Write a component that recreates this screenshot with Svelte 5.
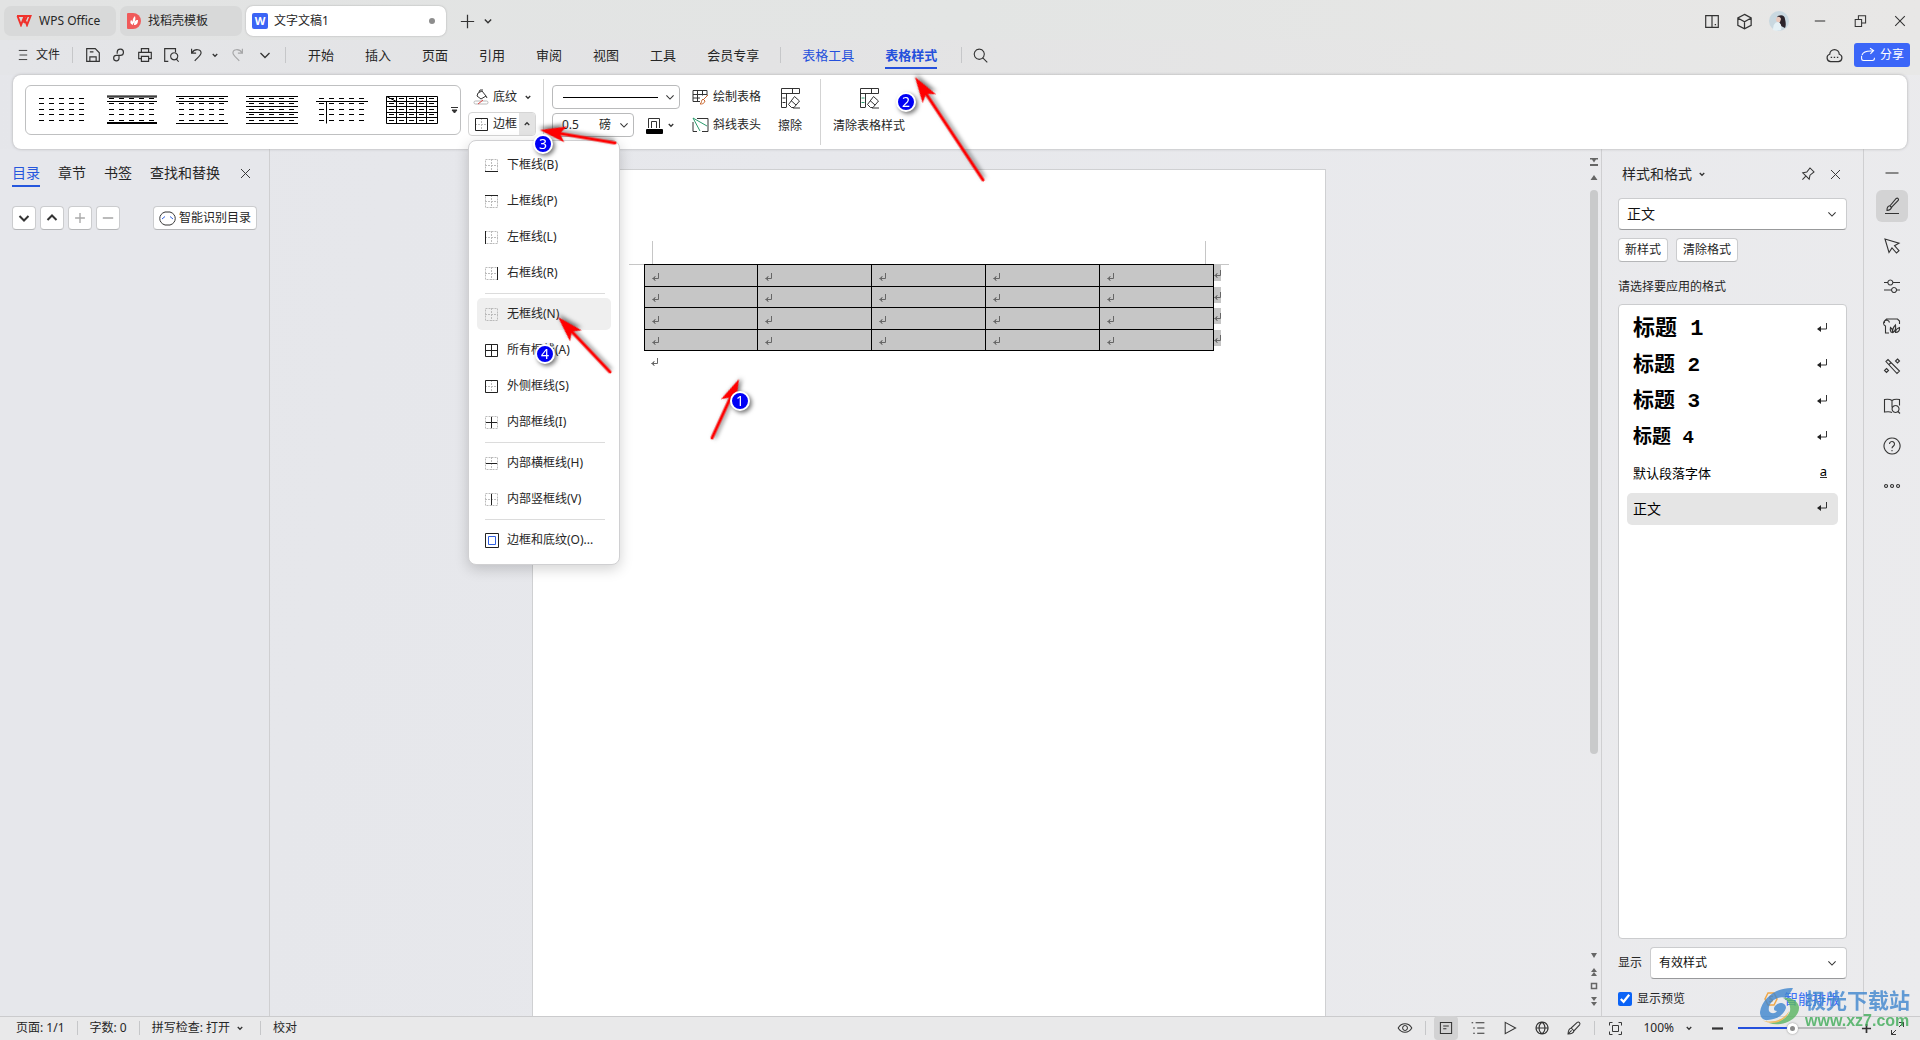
<script lang="ts">
  const ic: Record<string, string> = {
    burger: 'M4 3.500h12M5 10h11M4 16.500h12',
    save: 'M3 3h9.500l4.500 4.500v9.500h-14zM6.500 17v-5h7v5M6.500 6.500h4',
    link: 'M8 8.500v-2a3.500 3.500 0 1 1 3.500 4h-4.500a3 3 0 1 0 3 3.500v-3',
    print: 'M6 7v-4h8v4M6 14h-3v-7h14v7h-3M6 11.500h8v5.500h-8z',
    find: 'M7 17h-4v-14h12v4M13.500 7.500a4 4 0 1 0 .1 0M16 14.500l2.500 3',
    undo: 'M4 3v5h5M4.500 7.500c3-5 10-4 10 0 0 3-4 5.500-7 9',
    redo: 'M16 3v5h-5M15.500 7.500c-3-5-10-4-10 0 0 3 4 5.500 7 9',
    down: 'M5.500 8l4.500 4.500 4.500-4.500',
    up: 'M5.500 12l4.500-4.500 4.500 4.500',
    plus: 'M10 3v14M3 10h14',
    minus: 'M3.500 10h13',
    close: 'M4 4l12 12M16 4l-12 12',
    search: 'M8.500 2.500a6 6 0 1 0 .1 0M13 13l5 5',
    split: 'M3 4h14v13h-14zM10 4v13M13 14h1.500',
    cube: 'M10 2.500l7 3.800v7.700l-7 3.800-7-3.800v-7.700zM3 6.300l7 4 7-4M10 10.300v7.500',
    restore: 'M4 8h8v9h-8zM8 8v-4.500h9v9h-5',
    cloud: 'M6 16.500a4 4 0 0 1-1-7.800 5 5 0 0 1 10 0 4 4 0 0 1-1 7.800zM6 12h1.500M9.200 12h1.500M12.500 12h1.500',
    share: 'M2 11v3.500a2.500 2.500 0 0 0 2.500 2.500h11a2.500 2.500 0 0 0 2.500-2.500v-1M2.500 10c1-3 6-5.500 13.500-5M12.500 1.500l4.500 3-4 4',
    pin: 'M3 17l4-4M3.500 8.500l8 8 1-5 5-4-5-5-4 5z',
    pen: 'M3 17.500h14M5 14.500c-.2-3 .8-4.500 3.200-5l6-7c1.500-1 3 .5 2 2l-6.500 6.500c-.6 2.300-2 3.300-4.700 3.500zM8 10l2 2',
    cursor: 'M3 3l4 13.500 3-4.500 4.500 5 2.500-2.300-4.500-5 4.500-2.500z',
    sliders: 'M2 6.500h3.500M11 6.500h7M8.300 4a2.500 2.500 0 1 0 .1 0M2 14h7M15 14h3M12 11.500a2.500 2.500 0 1 0 .1 0',
    art: 'M7 17h-3.500v-7a3 3 0 1 1 4-3.500M2.500 7v-2l2-2h11l2 2v3M9 16c-1-2-1-3-.5-4.500 2 1.500 2.500 3 2 5zM11 16.500c-1-3 .5-5.500 2.500-7.500 .5 3 0 6-2.500 7.500zM13.500 16.500c0-2.500 1.500-4 4-5 .3 3-1 5-4 5z',
    wand: 'M4 5.500l2-2 11.500 11.500-2.500 2.500zM7 8.500l2-2M15.500 3l2 2-2 2-2-2zM4.500 12.500l2 2-2 2-2-2z',
    book: 'M10 16.500c-2-1.200-4-1-7.500-.5v-12.500c3.500-.5 5.500-.5 7.500 1 2-1.500 4-1.500 7.500-1v6M10 4.500v7M13.500 9.500a3.500 3.500 0 1 0 .1 0M16 15.500l2 2',
    help: 'M10 2a8 8 0 1 0 .1 0M7.500 8a2.500 2.500 0 1 1 4 2c-1 .8-1.500 1.200-1.500 2.300M10 14v1.200',
    dots: 'M4 8.500a1.500 1.500 0 1 0 .1 0M10 8.500a1.500 1.500 0 1 0 .1 0M16 8.500a1.500 1.500 0 1 0 .1 0',
    eye: 'M1.500 10c4-7 13-7 17 0-4 7-13 7-17 0zM10 7a3 3 0 1 0 .1 0',
    page: 'M3 3h14v14h-14zM6.500 7.500h7M6.500 11h4',
    list: 'M2 3.500h2M7 3.500h11M4 10h2M9 10h9M4 16.500h2M9 16.500h9',
    play: 'M4 3l13 7-13 7z',
    globe: 'M10 2.500a7.500 7.500 0 1 0 .1 0M2.500 10h15M10 2.500c-5 4-5 11 0 15M10 2.500c5 4 5 11 0 15',
    brush: 'M2.500 17.500c.3-4.500 1.500-7 4-7.500l7.500-7c2-1.500 4.500 1 3 3l-7 7.500c-.5 2.500-3 3.700-7.500 4zM6.500 10l3.500 3.500M2.500 17.500l4.500-4.500',
    fit: 'M2 6v-4h4M14 2h4v4M18 14v4h-4M6 18h-4v-4M6 6h8v8h-8z',
    expand: 'M12 2h6v6M18 2l-6 6M8 18h-6v-6M2 18l6-6',
  };
  const quick = ['save', 'link', 'print', 'find'];
  const ribbonTabs = ['开始', '插入', '页面', '引用', '审阅', '视图', '工具', '会员专享'];
  const dashRows = [3, 8, 14, 19, 25];
  const dashCols = [3, 13, 23, 33, 43];
  const thumbs = [
    { name: '无线', d: '' },
    { name: '粗上下', d: 'M1 1h50M1 2h50M1 6.500h50M1 27.500h50M1 28.500h50' },
    { name: '三线', d: 'M0 1.500h52M0 6.500h52M0 28.500h52' },
    { name: '横线', d: 'M0 1.500h52M0 6.500h52M0 11.500h52M0 17.500h52M0 22.500h52M0 28.500h52' },
    { name: '十字', d: 'M0 6.500h52M10.500 6.500v22' },
    { name: '网格', d: 'M.5 1.500h51v27h-51zM.5 6.500h51M.5 11.500h51M.5 17.500h51M.5 22.500h51M10.500 1.500v27M20.500 1.500v27M30.500 1.500v27M40.500 1.500v27M.5 1.500l10 5' },
  ];
  const groups = [
    [
      { t: '下框线(B)', d: 'M0 12.500h13' },
      { t: '上框线(P)', d: 'M0 .5h13' },
      { t: '左框线(L)', d: 'M.5 0v13' },
      { t: '右框线(R)', d: 'M12.500 0v13' },
    ],
    [
      { t: '无框线(N)', d: '' },
      { t: '所有框线(A)', d: 'M.5 .5h12v12h-12zM6.500 0v13M0 6.500h13' },
      { t: '外侧框线(S)', d: 'M.5 .5h12v12h-12z' },
      { t: '内部框线(I)', d: 'M6.500 1v11M1 6.500h11' },
    ],
    [
      { t: '内部横框线(H)', d: 'M1 6.500h11' },
      { t: '内部竖框线(V)', d: 'M6.500 1v11' },
    ],
  ];
  const styles = [
    { t: '标题 1', c: 'h1' },
    { t: '标题 2', c: 'h2' },
    { t: '标题 3', c: 'h3' },
    { t: '标题 4', c: 'h4' },
    { t: '默认段落字体', c: 'def' },
    { t: '正文', c: 'body' },
  ];
  const side = ['pen', 'cursor', 'sliders', 'art', 'wand', 'book', 'help', 'dots'];
  const views = ['page', 'list', 'play', 'globe', 'brush'];
  const arrows = [
    { x1: 712, y1: 438, x2: 739, y2: 379 },
    { x1: 983, y1: 180, x2: 915, y2: 77 },
    { x1: 615, y1: 143, x2: 540, y2: 130 },
    { x1: 610, y1: 372, x2: 558, y2: 317 },
  ].map((a) => {
    const len = Math.hypot(a.x2 - a.x1, a.y2 - a.y1);
    const deg = (Math.atan2(a.y2 - a.y1, a.x2 - a.x1) * 180) / Math.PI;
    return { ...a, len, deg };
  });
  const badges = [
    { n: 1, x: 740, y: 401 },
    { n: 2, x: 906, y: 102 },
    { n: 3, x: 543, y: 144 },
    { n: 4, x: 545, y: 354 },
  ];
  let zoom = $state(50);
  let preview = $state(true);
</script>

{#snippet icon(name: string, size: number = 16)}
  <svg class="icon" width={size} height={size} viewBox="0 0 20 20" aria-hidden="true"><path d={ic[name]} /></svg>
{/snippet}

{#snippet frame(d: string)}
  <svg class="frame" width="13" height="13" viewBox="0 0 13 13" aria-hidden="true">
    <path class="ghost" d="M.5 .5h12v12h-12zM6.500 0v13M0 6.500h13" />
    {#if d}<path {d} />{/if}
  </svg>
{/snippet}

{#snippet ret()}
  <svg class="ret" width="8" height="9" viewBox="0 0 8 9" aria-hidden="true"><path d="M6.500 0v5.500h-6M3.500 3l-2.500 2.500 2.500 2.500M2.500 4v3" /></svg>
{/snippet}

{#snippet eraser(green: boolean)}
  <svg width="21" height="22" viewBox="0 0 21 22" aria-hidden="true">
    <path d="M6 20.500h-4.500v-19h18v5h-18M6.500 6.500v14M12.500 1.500v5" />
    <path class:green d="M2.500 11h3M2.500 15.500h3" />
    <path d="M14.500 9.500l5 4.500-5.500 6.500h-2.500l-3-3zM11 13.500l5 4.500M13 21h7" />
  </svg>
{/snippet}

<div class="app">
  <header class="titlebar">
    <button class="tab">
      <svg width="16" height="12" viewBox="0 0 16 12" aria-hidden="true"><path class="wps" d="M1 1h13.500l-3.500 9-3-7.500-3 7.500-3.500-9M8 8l3-7" /></svg>
      WPS Office
    </button>
    <button class="tab docer">
      <svg width="14" height="16" viewBox="0 0 14 16" aria-hidden="true">
        <path class="red" d="M1 0h5a8 8 0 0 1 0 16h-5a1 1 0 0 1-1-1v-14a1 1 0 0 1 1-1z" />
        <path class="leaf" d="M6 12c-3-1-3-3-2-5 2 1 2 3 2 5zM6 11c-1-4 0-6 2-8 1 3 0 6-2 8zM7 12c0-3 1-5 4-5 0 3-1 5-4 5z" />
      </svg>
      找稻壳模板
    </button>
    <button class="tab active">
      <span class="wicon">W</span>
      文字文稿1
      <span class="dirty"></span>
    </button>
    <button class="bare newtab" aria-label="新建">{@render icon('plus', 19)}</button>
    <button class="bare tablist" aria-label="标签列表">{@render icon('down', 14)}</button>
    <div class="window">
      <button class="bare" aria-label="分屏">{@render icon('split', 18)}</button>
      <button class="bare" aria-label="应用">{@render icon('cube', 19)}</button>
      <svg class="avatar" width="20" height="20" viewBox="0 0 20 20" aria-hidden="true">
        <circle cx="10" cy="10" r="10" />
        <path class="hair" d="M8 6c3-3 8-2 8 2 1 4 1 7 0 9l-4-2z" />
        <path class="skin" d="M7 8c1-3 4-3 5 0l-1 3c-2 1-4 0-4-3z" />
        <path class="dress" d="M4 19c0-5 2-8 5-8 3 1 4 4 3 8-3 1-6 1-8 0z" />
      </svg>
      <button class="bare wide" aria-label="最小化">{@render icon('minus', 16)}</button>
      <button class="bare wide" aria-label="还原">{@render icon('restore', 16)}</button>
      <button class="bare wide" aria-label="关闭">{@render icon('close', 16)}</button>
    </div>
  </header>

  <nav class="menubar">
    <button class="bare file">{@render icon('burger', 14)}文件</button>
    <span class="vline"></span>
    <div class="quick">
      {#each quick as q}<button class="bare" aria-label={q}>{@render icon(q, 18)}</button>{/each}
      <button class="bare" aria-label="撤销">{@render icon('undo', 18)}</button>
      <button class="bare narrow bold" aria-label="撤销列表">{@render icon('down', 10)}</button>
      <button class="bare faded" aria-label="恢复">{@render icon('redo', 18)}</button>
      <button class="bare" aria-label="更多">{@render icon('down', 20)}</button>
    </div>
    <span class="vline"></span>
    <div class="tabs">
      {#each ribbonTabs as t}<button class="bare">{t}</button>{/each}
    </div>
    <span class="vline"></span>
    <button class="bare ctx">表格工具</button>
    <button class="bare ctx current">表格样式</button>
    <span class="vline"></span>
    <button class="bare searchbtn" aria-label="搜索">{@render icon('search', 17)}</button>
    <div class="account">
      <button class="bare" aria-label="云">{@render icon('cloud', 19)}</button>
      <button class="share">{@render icon('share', 16)}分享</button>
    </div>
  </nav>

  <section class="ribbon">
    <div class="gallery">
      {#each thumbs as th}
        <button class="thumb" aria-label={th.name}>
          <svg width="52" height="30" viewBox="0 0 52 30" aria-hidden="true">
            {#each dashRows as y}{#each dashCols as x}<rect {x} {y} width="5" height="1" />{/each}{/each}
            <path d={th.d} />
          </svg>
        </button>
      {/each}
      <button class="bare more" aria-label="更多样式"><svg width="7" height="7" viewBox="0 0 7 7" aria-hidden="true"><path d="M0 .5h7M1 3h5l-2.500 3z" /></svg></button>
    </div>
    <div class="stack">
      <button class="bare shade">
        <svg width="16" height="16" viewBox="0 0 16 16" aria-hidden="true">
          <path class="line" d="M5 4l4-2 4 5-5 3-4-3zM6 3l1-2h3M13 7l1 2" /><rect class="pale" x="1" y="12" width="14" height="3" rx="1.500" /><path class="redline" d="M5 15l5-4" />
        </svg>
        底纹 {@render icon('down', 10)}
      </button>
      <div class="split">
        <button class="main">{@render frame('M.5 .5h12v12h-12z')}边框</button>
        <button class="caret" aria-label="边框选项" aria-expanded="true">{@render icon('up', 10)}</button>
        <div class="menu" role="menu">
          {#each groups as g, gi}
            {#each g as item, i}
              <button role="menuitem" class:hover={gi === 1 && i === 0}>{@render frame(item.d)}{item.t}</button>
            {/each}
            <hr />
          {/each}
          <button role="menuitem" class="dialog">
            <svg class="frame" width="15" height="15" viewBox="0 0 15 15" aria-hidden="true"><path d="M.5 .5h13v14h-13z" /><path class="blue" d="M3.500 3.500h7v8h-7z" /></svg>边框和底纹(O)...
          </button>
        </div>
      </div>
    </div>
    <span class="rule"></span>
    <div class="stack pens">
      <button class="combo linetype" aria-label="线型"><span></span>{@render icon('down', 16)}</button>
      <div class="row">
        <button class="combo weight" aria-label="线宽"><b>0.5</b><b>磅</b>{@render icon('down', 16)}</button>
        <button class="bare color" aria-label="边框颜色">
          <svg width="17" height="17" viewBox="0 0 17 17" aria-hidden="true"><path class="line" d="M2.500 11v-9.500h11v9.500M5.500 11v-6.500h5v6.500" /><rect x="0" y="12" width="17" height="5" rx="1" /></svg>
          {@render icon('down', 10)}
        </button>
      </div>
    </div>
    <div class="stack draw">
      <button class="bare">
        <svg width="17" height="16" viewBox="0 0 17 16" aria-hidden="true"><path class="line" d="M8 12.500h-7v-11h14v5M1 5.500h14M5.500 1.500v11M10.500 1.500v5M1 9h7" /><path class="orange" d="M16 6l-5 5M11 10l2 2c-1 3-3 3-5 3 2-1 1-4 3-5z" /></svg>
        绘制表格
      </button>
      <button class="bare">
        <svg width="17" height="16" viewBox="0 0 17 16" aria-hidden="true"><path class="line" d="M5 1.500h11v13h-6M1 5v9.500h4" /><path class="green" d="M1 1l14 8M1 1l7 13" /></svg>
        斜线表头
      </button>
    </div>
    <button class="bare big">{@render eraser(false)}擦除</button>
    <span class="rule"></span>
    <button class="bare big">{@render eraser(true)}清除表格样式</button>
  </section>

  <main>
    <aside class="outline">
      <div class="ptabs">
        <button class="bare on">目录</button>
        <button class="bare">章节</button>
        <button class="bare">书签</button>
        <button class="bare">查找和替换</button>
        <button class="bare" aria-label="关闭窗格">{@render icon('close', 15)}</button>
      </div>
      <div class="tools">
        <button class="box" aria-label="展开">{@render icon('down', 20)}</button>
        <button class="box" aria-label="收起">{@render icon('up', 20)}</button>
        <button class="box off" aria-label="增加">{@render icon('plus', 14)}</button>
        <button class="box off" aria-label="减少">{@render icon('minus', 16)}</button>
        <button class="box smart">
          <svg width="17" height="15" viewBox="0 0 17 15" aria-hidden="true"><path class="line" d="M6 1h5c7 2 7 11 0 13h-5c-7-2-7-11 0-13z" /><path class="blue" d="M3 8l3-2.500M11 5.500l3 2.500" /></svg>
          智能识别目录
        </button>
      </div>
    </aside>

    <section class="canvas">
      <div class="desk">
        <article class="page">
          <div class="corners"><i class="left"></i><i class="right"></i></div>
          <div class="sheet">
            <table>
              <tbody>
                {#each [1, 2, 3, 4] as r (r)}
                  <tr>
                    {#each [1, 2, 3, 4, 5] as c (c)}<td>{@render ret()}</td>{/each}
                  </tr>
                {/each}
              </tbody>
            </table>
            <div class="ends">
              {#each [1, 2, 3, 4] as r (r)}<span>{@render ret()}</span>{/each}
            </div>
          </div>
          <p>{@render ret()}</p>
        </article>
      </div>
      <div class="scroll">
        <svg width="10" height="26" viewBox="0 0 10 26" aria-hidden="true"><path d="M1 1h8v1.500h-2l-2 3-2-3h-2zM1 7h8v2h-8zM5 18l3.500 5h-7z" /></svg>
        <span class="thumbbar"></span>
        <span class="track"></span>
        <svg width="10" height="60" viewBox="0 0 10 60" aria-hidden="true"><path d="M2 3h6l-3 5zM5 18l3 4h-6zM5 22l3 4h-6zM2 52h6l-3 4zM2 47h6l-3 4z" /><rect class="ring" x="2.500" y="33.500" width="5" height="5" /></svg>
      </div>
    </section>

    <aside class="stylepane">
      <div class="phead">
        <button class="bare">样式和格式 {@render icon('down', 10)}</button>
        <button class="bare pinbtn" aria-label="固定">{@render icon('pin', 16)}</button>
        <button class="bare" aria-label="关闭样式">{@render icon('close', 15)}</button>
      </div>
      <div class="sel big14">
        <select aria-label="当前样式"><option>正文</option></select>
        {@render icon('down', 16)}
      </div>
      <div class="acts"><button class="box">新样式</button><button class="box">清除格式</button></div>
      <p class="hint">请选择要应用的格式</p>
      <ul>
        {#each styles as s}
          <li class={s.c}>
            <button>{s.t}
              {#if s.c === 'def'}<span class="ua">a</span>
              {:else}<svg width="10" height="10" viewBox="0 0 10 10" aria-hidden="true"><path class="line" d="M9.500 0v6h-8" /><path d="M0 6l4-3v6z" /></svg>{/if}
            </button>
          </li>
        {/each}
      </ul>
      <div class="show">
        <label for="show">显示</label>
        <div class="sel">
          <select id="show"><option>有效样式</option></select>
          {@render icon('down', 16)}
        </div>
      </div>
      <div class="foot">
        <label><input type="checkbox" bind:checked={preview} />显示预览</label>
        <a href="#layout"><svg width="14" height="14" viewBox="0 0 14 14" aria-hidden="true"><path class="coin" d="M4 1h6l3 6-3 6h-6l-3-6zM9 4.500c-4-1-4 2-2 2.500s2 3.500-2 2.500" /></svg>智能排版</a>
      </div>
    </aside>

    <nav class="rail">
      <button class="grey" aria-label="收起侧栏">{@render icon('minus', 20)}</button>
      {#each side as s, i}<button class:sel2={i === 0} aria-label={s}>{@render icon(s, 20)}</button>{/each}
    </nav>
  </main>

  <footer>
    <span>页面: 1/1</span><span class="vline"></span>
    <span>字数: 0</span><span class="vline"></span>
    <button class="bare spell">拼写检查: 打开 {@render icon('down', 10)}</button><span class="vline"></span>
    <button class="bare">校对</button>
    <div class="status">
      <button class="bare" aria-label="护眼">{@render icon('eye', 16)}</button>
      <span class="vline"></span>
      {#each views as v, i}<button class="view" class:on={i === 0} aria-label={v}>{@render icon(v, 16)}</button>{/each}
      <span class="vline"></span>
      <button class="bare fitbtn" aria-label="适应">{@render icon('fit', 15)}</button>
      <button class="bare pct">100% {@render icon('down', 10)}</button>
      <button class="bare bold" aria-label="缩小">{@render icon('minus', 17)}</button>
      <input type="range" min="0" max="100" bind:value={zoom} aria-label="缩放" />
      <button class="bare bold" aria-label="放大">{@render icon('plus', 13)}</button>
      <button class="bare full" aria-label="全屏">{@render icon('expand', 15)}</button>
    </div>
  </footer>

  <svg class="marks" aria-hidden="true">
    {#each arrows as a}
      <g transform="translate({a.x2} {a.y2}) rotate({a.deg})">
        <path class="shaft" d="M{-a.len} 0H-18" />
        <path class="head" d="M0 0L-26 -8L-20 0L-26 8z" />
      </g>
    {/each}
    {#each badges as b}
      <g>
        <circle cx={b.x} cy={b.y} r="9" />
        <text x={b.x} y={b.y + 5}>{b.n}</text>
      </g>
    {/each}
  </svg>

  <div class="brand">
    <svg width="44" height="40" viewBox="0 0 44 40" aria-hidden="true">
      <path class="wave" d="M34 2c-16-1-31 10-33 24 0 5 3 9 8 8 8 0 16-5 18-12 0-5-7-7-11-2-2 3-1 5 2 5-2 3-6 3-8 0-2-8 8-16 17-13 3-4 6-7 7-10z" />
      <path class="grass" d="M10 37c9 0 18-4 21-12 1-6-2-11-7-13 8-1 15 3 16 9 1 11-16 21-30 16z" />
      <path class="sun" d="M3 34c10 4 22 0 27-9-2 9-15 16-27 9z" />
    </svg>
    <div><strong>极光下载站</strong><em>www.xz7.com</em></div>
  </div>
</div>

<style>
  :global(body) { margin: 0; }
  .app { position: relative; display: flex; flex-direction: column; height: 100vh; min-width: 1280px; overflow: hidden; font: 12px/18px "Noto Sans", "Noto Sans CJK SC", sans-serif; color: #262626; background: linear-gradient(100deg, #e5e6ea 0%, #e7e8ec 40%, #ebebed 100%); }
  * { box-sizing: border-box; }
  button, select, input { font: inherit; color: inherit; margin: 0; }
  button { padding: 0; border: 0; background: none; white-space: nowrap; }
  svg { flex: none; }
  path { fill: none; stroke: #333; stroke-width: 1; }
  .icon path { stroke-width: 1.3; }
  .bold .icon path { stroke-width: 2.6; }
  .bare { display: flex; align-items: center; justify-content: center; }
  .vline { flex: none; width: 1px; height: 16px; background: #c6c7c9; }

  .titlebar { display: flex; align-items: center; gap: 4px; height: 40px; padding: 2px 4px 0; background: linear-gradient(90deg, #e2e3e3, #e3e5e4 50%, #e8e7e6); }
  .tab { display: flex; align-items: center; gap: 7px; width: 112px; height: 30px; padding: 0 12px; border-radius: 7px; background: #d8d9d9; }
  .tab.docer { width: 122px; padding: 0 7px; }
  .tab.active { gap: 6px; width: 200px; padding: 0 6px; background: #fff; box-shadow: 0 0 2px #a5a5a5; }
  .wps { stroke: #f0322c; stroke-width: 2; }
  .red { fill: #f05a5a; stroke: none; }
  .leaf { fill: #fff; stroke: none; }
  .wicon { width: 16px; height: 16px; border-radius: 2px; background: #3b64f5; color: #fff; font: bold 11px/15px "Open Sans", sans-serif; text-align: center; }
  .dirty { width: 6px; height: 6px; margin: 0 5px 0 auto; border-radius: 3px; background: #8d8d8d; }
  .newtab { margin-left: 8px; }
  .tablist path { stroke-width: 2; }
  .window { display: flex; align-items: center; gap: 14px; margin: 0 3px 0 auto; }
  .window .wide { width: 26px; }
  .avatar { margin: 0 4px 0 1px; }
  .avatar circle { fill: #c9d8e0; }
  .avatar path { stroke: none; }
  .hair { fill: #2c242b; }
  .skin { fill: #e9c9bd; }
  .dress { fill: #e5f1f6; }

  .menubar { display: flex; align-items: center; height: 35px; padding: 0 10px 5px 16px; background: linear-gradient(90deg, #e4e5e8, #e3e3e4 40%, #e8e8e7); font-size: 13px; }
  .file { gap: 6px; margin-right: 12px; font-size: 12px; }
  .quick { display: flex; margin: 0 7px; }
  .quick .bare { width: 26px; height: 24px; }
  .quick .narrow { width: 10px; }
  .quick .faded { margin: 0 2px 0 4px; opacity: .35; }
  .tabs { display: flex; gap: 31px; margin: 0 21px 0 22px; }
  .ctx { height: 28px; margin-left: 21px; color: #2450dc; }
  .ctx.current { margin: 0 24px 0 31px; font-weight: bold; border-bottom: 2px solid #2450dc; border-top: 2px solid transparent; }
  .searchbtn { margin-left: 10px; }
  .account { display: flex; gap: 10px; margin-left: auto; }
  .share { display: flex; align-items: center; gap: 4px; width: 56px; height: 24px; padding: 0 6px; border-radius: 3px; background: #3b66f8; color: #fff; font-size: 12px; }
  .share path { stroke: #fff; }

  .ribbon { position: relative; z-index: 2; display: flex; flex: none; height: 74px; margin: 0 13px; padding: 10px 12px; border-radius: 8px; background: #fff; box-shadow: 0 0 3px #a9a9ab; }
  .gallery { display: flex; align-items: center; gap: 18px; width: 436px; height: 50px; padding: 0 0 0 10px; border: 1px solid #bfc0c1; border-radius: 6px; }
  .thumb, .thumb svg { display: block; }
  .thumb path { stroke: #000; }
  .more { width: 7px; margin-left: -5px; }
  .more path { fill: #333; }
  .stack { display: flex; flex-direction: column; gap: 4px; margin-left: 7px; }
  .stack .shade { justify-content: flex-start; gap: 4px; height: 23px; padding-left: 5px; }
  .shade .icon { margin-left: 2px; }
  .shade .icon path, .caret path, .color .icon path { stroke-width: 2.6; }
  .pale { fill: none; stroke: #b9b9b9; }
  .redline { stroke: #d44; }
  .split { position: relative; display: flex; width: 68px; height: 24px; border: 1px solid #d5d5d5; border-radius: 4px; }
  .main { display: flex; align-items: center; gap: 5px; width: 50px; padding-left: 6px; }
  .caret { display: flex; align-items: center; justify-content: center; flex: 1; background: #e3e3e3; border-radius: 0 3px 3px 0; }
  .ghost { stroke: #bbb; stroke-dasharray: 2 1; }
  .frame path:not(.ghost) { stroke: #222; }
  .blue, .frame path.blue:not(.ghost) { stroke: #2f5fe0; }
  .menu { position: absolute; top: 27px; left: -1px; display: flex; flex-direction: column; gap: 4px; width: 152px; padding: 8px; border: 1px solid #d0d0d2; border-radius: 8px; background: #fff; box-shadow: 0 4px 14px #0000002e; }
  .menu button { display: flex; align-items: center; gap: 9px; height: 32px; padding-left: 8px; border-radius: 5px; }
  .menu .dialog { gap: 7px; }
  .menu button.hover { background: #efefef; }
  .menu hr { width: 120px; height: 1px; margin: 0 0 0 8px; border: 0; background: #dcdcdc; }
  .rule { flex: none; width: 1px; height: 66px; margin: -6px 0 0 7px; background: #d3d3d3; }
  .pens { margin-left: 8px; }
  .row { display: flex; gap: 12px; }
  .combo { display: flex; align-items: center; justify-content: space-between; height: 24px; border: 1px solid #b9babb; border-radius: 4px; }
  .combo b { font-weight: normal; }
  .linetype { width: 128px; padding: 0 1px 0 10px; }
  .linetype span { width: 95px; height: 1px; background: #000; }
  .weight { width: 82px; padding: 0 1px 0 9px; }
  .weight b:first-child { margin-right: auto; }
  .weight .icon { margin-left: 5px; }
  .color { gap: 3px; }
  .draw { margin-left: 12px; }
  .draw .bare { gap: 4px; height: 24px; }
  .orange { stroke: #c9662c; }
  .green { stroke: #2b9a6c; }
  .big { flex-direction: column; justify-content: flex-start; gap: 8px; height: 54px; margin-left: 17px; padding-top: 2px; }
  .big + .rule { margin-left: 18px; }
  .rule + .big { margin-left: 12px; }

  main { display: flex; flex: 1; min-height: 0; }
  .outline { flex: none; width: 270px; padding: 12px; border-right: 1px solid #cfcfd1; background: #e6e7eb; }
  .ptabs { display: flex; gap: 18px; font-size: 14px; line-height: 20px; }
  .ptabs .bare { height: 26px; padding-bottom: 2px; }
  .ptabs .on { color: #2657dd; border-bottom: 2px solid #2657dd; padding-bottom: 0; }
  .tools { display: flex; gap: 4px; margin-top: 19px; }
  .box { display: flex; align-items: center; justify-content: center; flex: none; height: 24px; border: 1px solid #cbccce; border-bottom-color: #b5b6b8; border-radius: 4px; background: #fff; }
  .tools .box { width: 24px; }
  .tools .box .icon path { stroke-width: 2; }
  .tools .off .icon path { stroke: #aaa; }
  .tools .smart { width: 104px; margin-left: 29px; gap: 3px; }

  .canvas { display: flex; flex: 1; min-width: 0; }
  .desk { display: flex; flex: 1; justify-content: center; padding-top: 20px; }
  .page { width: 794px; border: 1px solid #cfd0d2; border-bottom: 0; background: #fff; }
  .corners { display: flex; justify-content: space-between; margin: 71px 96px 0; }
  .corners i { width: 24px; height: 24px; border-bottom: 1px solid #c6c6c6; }
  .left { border-right: 1px solid #c6c6c6; }
  .right { border-left: 1px solid #c6c6c6; }
  .sheet { display: flex; margin: -1px 0 0 111px; }
  table { width: 570px; height: 87px; border-collapse: collapse; table-layout: fixed; }
  td { height: 21px; padding: 4px 0 0 7px; border: 1px solid #000; background: #c6c6c6; line-height: 0; }
  .ends { display: flex; flex-direction: column; justify-content: space-between; padding: 1px 0 5px; }
  .ends span { display: block; width: 7px; height: 16px; padding-top: 5px; background: #c6c6c6; line-height: 0; }
  .ret path { stroke: #666; }
  .page p { margin: 7px 0 0 118px; line-height: 0; }
  .scroll { display: flex; flex-direction: column; align-items: center; width: 14px; padding: 8px 0 6px; }
  .scroll path { fill: #666; stroke: none; }
  .thumbbar { flex: 563; width: 8px; margin-top: 7px; border-radius: 4px; background: #c9cacb; }
  .track { flex: 196; }
  .ring { fill: none; stroke: #666; stroke-width: 1.500; }

  .stylepane { display: flex; flex-direction: column; flex: none; width: 262px; padding: 14px 16px 5px; border-left: 1px solid #cfcfd1; }
  .phead { display: flex; align-items: center; gap: 12px; height: 22px; margin: 0 4px; font-size: 14px; line-height: 20px; }
  .phead .bare:first-child { gap: 5px; }
  .phead .bare:first-child path { stroke-width: 2.6; }
  .pinbtn { margin-left: auto; }
  .sel { position: relative; display: flex; align-items: center; flex: 1; }
  .sel select { width: 100%; height: 32px; padding: 0 8px; appearance: none; border: 1px solid #cbccce; border-bottom-color: #98999b; border-radius: 4px; background: #fff; color: #111; }
  .sel .icon { position: absolute; right: 7px; pointer-events: none; }
  .big14 { flex: none; margin-top: 13px; font-size: 14px; }
  .acts { display: flex; gap: 8px; margin-top: 8px; }
  .acts .box { padding: 0 6px; }
  .hint { margin: 16px 0 8px; }
  ul { display: flex; flex-direction: column; flex: 1; gap: 4px; margin: 0; padding: 8px; list-style: none; border: 1px solid #cbccce; border-radius: 4px; background: #fff; }
  li button { display: flex; align-items: center; justify-content: space-between; width: 100%; height: 32px; padding: 0 11px 0 6px; border-radius: 5px; color: #000; white-space: pre; }
  li svg { margin-bottom: 4px; }
  li svg path:last-child { fill: #222; stroke: none; }
  .h1, .h2, .h3, .h4 { font: bold 21px/28px "Liberation Mono", "Noto Sans CJK SC", monospace; }
  .h1 button, .h2 button, .h3 button, .h4 button { padding-top: 2px; }
  .h1 { font-size: 22px; }
  .h4 { font-size: 19px; }
  .def { font-size: 13px; }
  .body { font-size: 14px; }
  .body button { background: #e5e5e5; }
  .ua { margin-bottom: 4px; border-bottom: 1px solid #333; font-size: 13px; line-height: 12px; }
  .show { display: flex; align-items: center; gap: 8px; margin-top: 8px; }
  .foot { display: flex; align-items: center; justify-content: space-between; height: 24px; margin-top: 8px; }
  .foot label { display: flex; align-items: center; gap: 5px; }
  .foot input { width: 14px; height: 14px; accent-color: #0b63f6; }
  .foot a { display: flex; align-items: center; gap: 6px; margin-right: 7px; color: #3b6ff5; font-size: 14px; text-decoration: none; }
  .coin { stroke: #f0a848; stroke-width: 1.500; }
  .rail { display: flex; flex-direction: column; flex: none; align-items: center; gap: 8px; width: 57px; padding-top: 9px; border-left: 1px solid #cfcfd1; }
  .rail button { display: flex; align-items: center; justify-content: center; width: 32px; height: 32px; border-radius: 6px; }
  .rail .sel2 { background: #d3d3d4; }
  .rail path { stroke-width: 1.1; }
  .rail .grey { height: 24px; padding-top: 6px; }
  .rail .grey path { stroke: #888; stroke-width: 2; }

  footer { display: flex; align-items: center; flex: none; gap: 12px; height: 24px; padding: 0 15px 1px 16px; border-top: 1px solid #cbcbcd; background: #e9e9ea; }
  footer .vline { height: 14px; }
  .spell { gap: 5px; margin-right: 3px; }
  .spell path, .pct path { stroke-width: 2.6; }
  .status { display: flex; align-items: center; margin-left: auto; }
  .status > .vline:nth-child(2) { margin: 0 8px 0 12px; }
  .view { display: flex; align-items: center; justify-content: center; width: 24px; height: 24px; margin-right: 8px; border-radius: 4px; }
  .view.on { background: #d2d2d3; }
  .fitbtn { margin: 0 20px 0 13px; }
  .pct { gap: 10px; margin-right: 15px; }
  input[type="range"] { width: 108px; height: 12px; margin: 0 14px 0 12px; appearance: none; background: linear-gradient(90deg, #2450dc 50%, #b8b9bb 50%) center / 100% 2px no-repeat; }
  input[type="range"]::-webkit-slider-thumb { appearance: none; width: 11px; height: 11px; border: 3px solid #fff; border-radius: 6px; background: #8a8a8a; box-shadow: 0 0 2px #888; }
  .full { margin-left: 17px; }

  .marks { position: absolute; z-index: 3; top: 0; left: 0; width: 100%; height: 100%; pointer-events: none; }
  .marks g { filter: drop-shadow(2px 2px 2px #00000088); }
  .shaft { stroke: #f00; stroke-width: 3; stroke-linecap: round; }
  .head { fill: #f00; stroke: none; }
  .marks circle { fill: #0000f5; stroke: #fff; stroke-width: 2; }
  .marks text { fill: #fff; font-size: 14px; text-anchor: middle; }
  .brand { position: absolute; z-index: 4; right: 10px; bottom: 8px; display: flex; align-items: center; gap: 2px; opacity: .8; pointer-events: none; }
  .brand path { stroke: none; }
  .brand .wave { fill: #3f86cf; }
  .brand .grass { fill: #5bb562; }
  .brand .sun { fill: #f3b13c; }
  .brand svg { margin-bottom: 6px; }
  .brand div { display: flex; flex-direction: column; }
  .brand strong { color: #3f86cf; font-size: 21px; line-height: 24px; }
  .brand em { color: #40ac59; font: bold 16px/18px "Liberation Sans", sans-serif; }
</style>
